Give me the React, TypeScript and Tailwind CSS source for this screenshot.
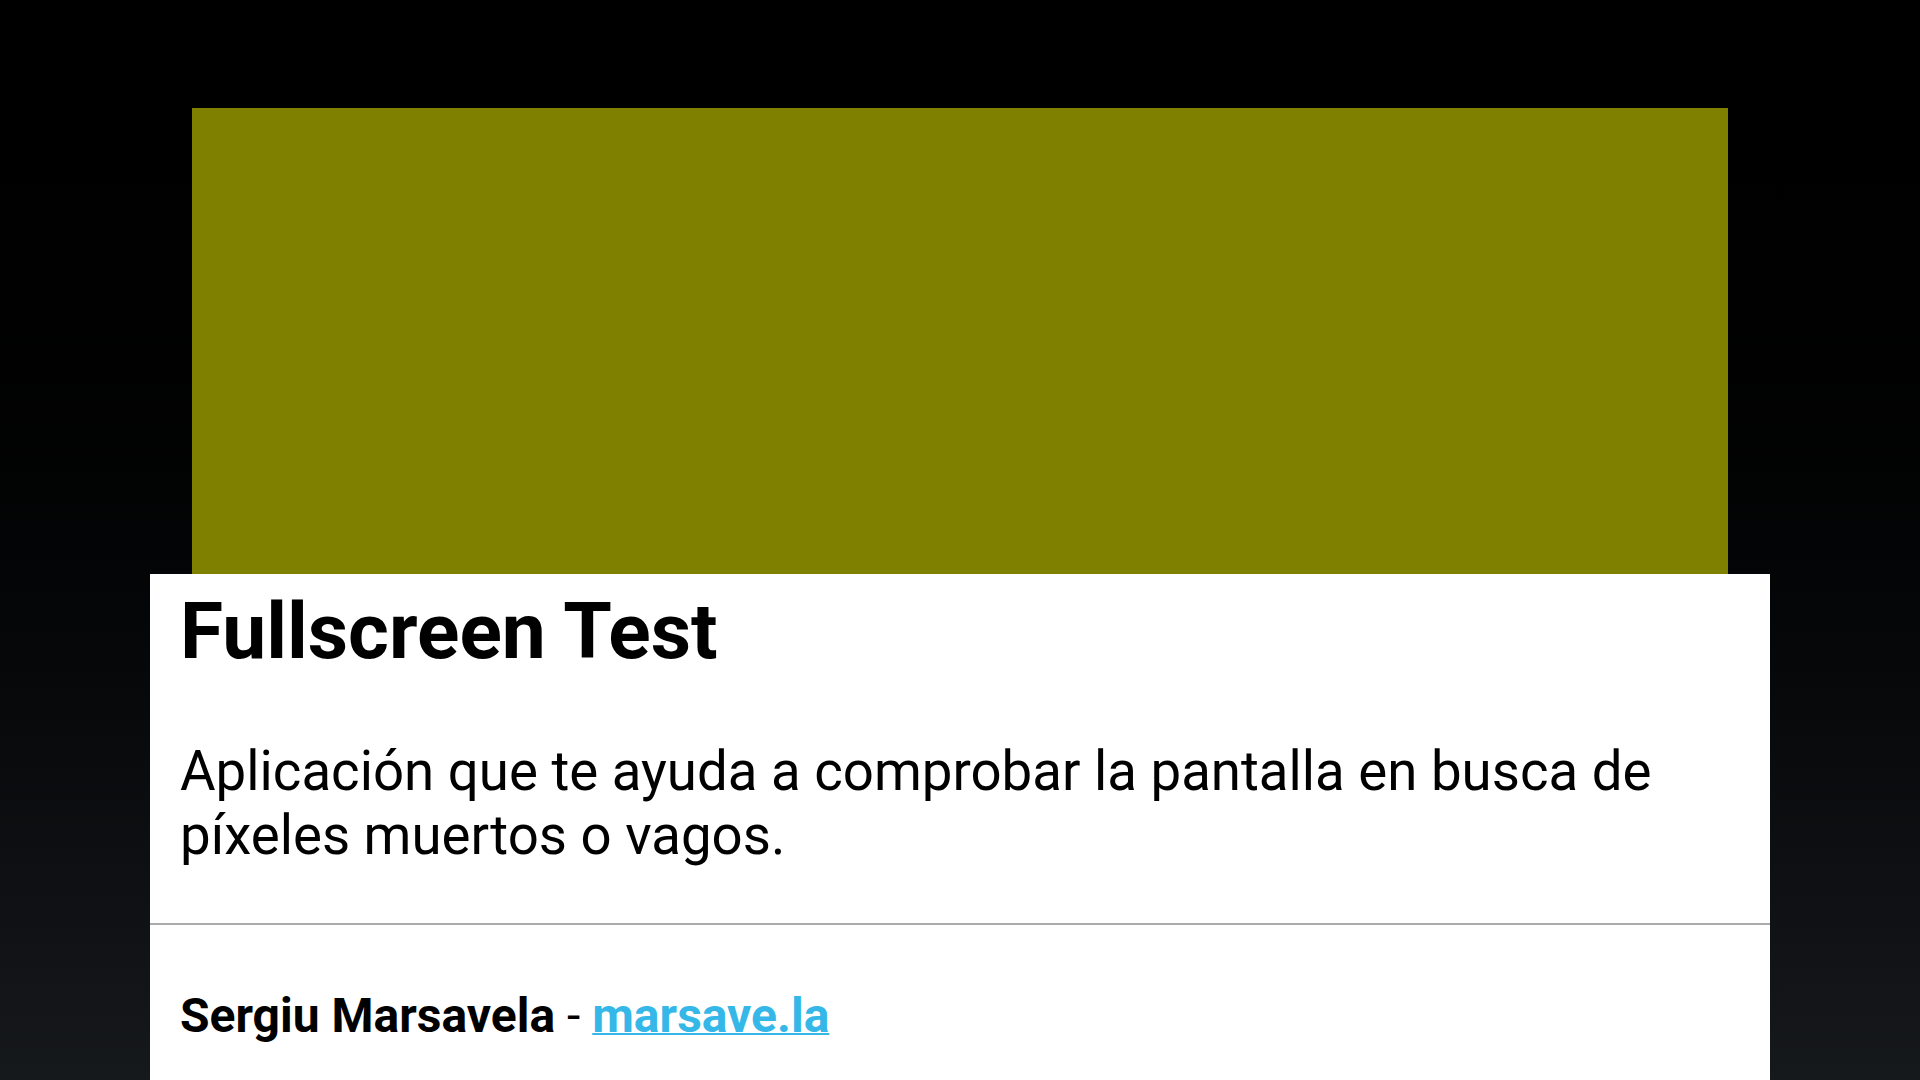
import React from "react";

const App: React.FC = () => {
  return (
    <div className="h-screen w-full overflow-hidden bg-gradient-to-b from-black to-[#16191c] font-['Roboto',sans-serif]">
      <div className="flex flex-col items-center pt-[108px]">
        {/* Color test area */}
        <div className="w-[1536px] h-[466px] bg-[#808000]" />

        {/* Info card */}
        <div className="w-[1620px] bg-white pb-40">
          <div className="px-[30px] pt-[10px] pb-[56px]">
            <h1 className="text-[78.5px] leading-[1.2] font-bold text-black">
              Fullscreen Test
            </h1>
            <p className="mt-[61px] text-[54.6px] leading-[64px] text-black">
              Aplicación que te ayuda a comprobar la pantalla en busca de
              píxeles muertos o vagos.
            </p>
          </div>
          <div className="border-t-2 border-[#aaaaaa] px-[30px] pt-[62px]">
            <p className="text-[48px] leading-[1.2] font-bold text-black">
              Sergiu Marsavela <span className="font-normal">-</span>{" "}
              <a href="#" className="text-[#35b7e8] underline decoration-2">
                marsave.la
              </a>
            </p>
          </div>
        </div>
      </div>
    </div>
  );
};

export default App;
